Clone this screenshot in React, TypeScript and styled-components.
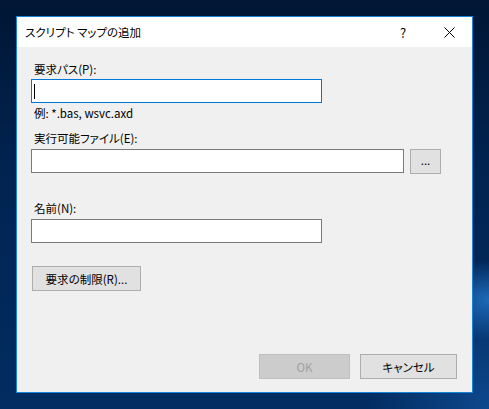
import React from 'react';
import styled, { createGlobalStyle } from 'styled-components';

const GlobalStyle = createGlobalStyle`
  html, body {
    margin: 0;
    padding: 0;
  }
  body {
    width: 489px;
    height: 409px;
    overflow: hidden;
    background:
      radial-gradient(ellipse 60px 40px at 489px 300px, rgba(40, 130, 220, 0.7), rgba(40, 130, 220, 0) 100%),
      radial-gradient(ellipse 120px 140px at 489px 409px, rgba(20, 90, 170, 0.6), rgba(20, 90, 170, 0) 100%),
      linear-gradient(180deg, #011634 0%, #012350 40%, #022d62 100%);
    font-family: "Noto Sans CJK JP", "Noto Sans", sans-serif;
    font-feature-settings: "palt";
    -webkit-font-smoothing: antialiased;
  }
  * {
    box-sizing: border-box;
  }
`;

const Desktop = styled.div`
  padding: 16px 0 0 16px;
`;

const Dialog = styled.div`
  width: 457px;
  height: 377px;
  border: 1px solid #1883d7;
  background: #f0f0f0;
  display: flex;
  flex-direction: column;
`;

const TitleBar = styled.div`
  height: 30px;
  background: #ffffff;
  display: flex;
  align-items: center;
`;

const Title = styled.span`
  flex: 1;
  padding-left: 8px;
  font-size: 11.5px;
  color: #000;
  line-height: 16px;
`;

const CaptionButton = styled.div`
  width: 46px;
  height: 30px;
  display: flex;
  align-items: center;
  justify-content: center;
  font-size: 13px;
  color: #000;
`;

const Body = styled.div`
  flex: 1;
  display: flex;
  flex-direction: column;
  padding: 14px 15px 13px 14px;
`;

const Label = styled.div<{ gap?: number; after?: number }>`
  font-size: 11.5px;
  line-height: 16px;
  color: #000;
  padding-left: 3px;
  margin-top: ${({ gap }) => gap ?? 0}px;
  margin-bottom: ${({ after }) => after ?? 2}px;
`;

const Hint = styled.div`
  font-size: 11.5px;
  line-height: 16px;
  color: #000;
  padding-left: 3px;
  margin-top: 2px;
`;

const Row = styled.div<{ gap?: number }>`
  display: flex;
  align-items: flex-start;
  gap: 6px;
  margin-top: ${({ gap }) => gap ?? 0}px;
  padding-left: 1px;
`;

const TextBox = styled.div<{ width: number; focused?: boolean }>`
  width: ${({ width }) => width}px;
  height: 24px;
  background: #ffffff;
  border: 1px solid ${({ focused }) => (focused ? '#0078d7' : '#7a7a7a')};
  display: flex;
  align-items: center;
  padding-left: 2px;
`;

const Caret = styled.span`
  width: 1px;
  height: 15px;
  background: #000;
`;

const Button = styled.button<{ width: number; disabled?: boolean }>`
  width: ${({ width }) => width}px;
  height: 25px;
  padding: 0;
  font-family: inherit;
  font-feature-settings: "palt";
  font-size: 11.5px;
  line-height: 16px;
  color: ${({ disabled }) => (disabled ? '#a0a0a0' : '#000')};
  background: ${({ disabled }) => (disabled ? '#cccccc' : '#e1e1e1')};
  border: 1px solid ${({ disabled }) => (disabled ? '#bfbfbf' : '#adadad')};
  display: flex;
  align-items: center;
  justify-content: center;
`;

const BrowseButton = styled(Button)`
  align-items: flex-end;
  padding-bottom: 5px;
`;

const Spacer = styled.div`
  flex: 1;
`;

const Footer = styled.div`
  display: flex;
  justify-content: flex-end;
  gap: 10px;
`;

const CloseIcon = () => (
  <svg width="11" height="11" viewBox="0 0 11 11">
    <path d="M0.5 0.5 L10.5 10.5 M10.5 0.5 L0.5 10.5" stroke="#000" strokeWidth="1" fill="none" />
  </svg>
);

export default function App() {
  return (
    <>
      <GlobalStyle />
      <Desktop>
        <Dialog>
          <TitleBar>
            <Title>スクリプト マップの追加</Title>
            <CaptionButton>?</CaptionButton>
            <CaptionButton>
              <CloseIcon />
            </CaptionButton>
          </TitleBar>
          <Body>
            <Label>要求パス(P):</Label>
            <TextBox width={291} focused>
              <Caret />
            </TextBox>
            <Hint>例: *.bas, wsvc.axd</Hint>
            <Label gap={9} after={3}>
              実行可能ファイル(E):
            </Label>
            <Row style={{ paddingLeft: 0 }}>
              <TextBox width={373} />
              <BrowseButton width={31}>...</BrowseButton>
            </Row>
            <Label gap={26} after={3}>
              名前(N):
            </Label>
            <TextBox width={291} />
            <Row gap={23}>
              <Button width={109}>要求の制限(R)...</Button>
            </Row>
            <Spacer />
            <Footer>
              <Button width={91} disabled>
                OK
              </Button>
              <Button width={97}>キャンセル</Button>
            </Footer>
          </Body>
        </Dialog>
      </Desktop>
    </>
  );
}
